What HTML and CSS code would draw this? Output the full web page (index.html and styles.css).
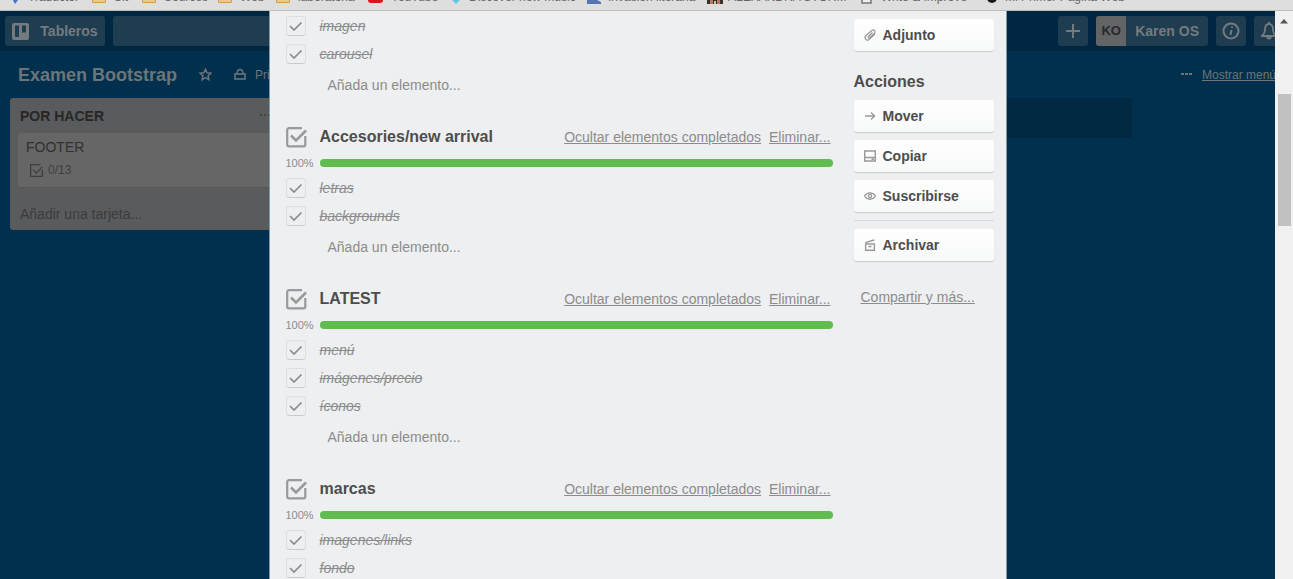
FILE: index.html
```html
<!DOCTYPE html>
<html lang="es">
<head>
<meta charset="utf-8">
<title>Examen Bootstrap | Trello</title>
<link rel="stylesheet" href="styles.css">
</head>
<body>
<nav class="bookmarks" aria-label="Marcadores">
  <a href="#" class="bm bm-first"><svg width="14" height="14" viewBox="0 0 14 14"><path d="M0 0h11v9H0z" fill="#4b8bf4"/><path d="M7 9h5l-3 4z" fill="#3b6fd6"/></svg>Traductor</a>
  <a href="#" class="bm bm-site"><i class="folder"></i>Sit</a>
  <a href="#" class="bm bm-sources"><i class="folder"></i>Sources</a>
  <a href="#" class="bm bm-web"><i class="folder"></i>Web</a>
  <a href="#" class="bm bm-lab"><i class="folder"></i>laboratoria</a>
  <a href="#" class="bm bm-youtube"><i class="youtube"></i>YouTube</a>
  <a href="#" class="bm bm-music"><svg width="12" height="12" viewBox="0 0 12 12"><path d="M6 0l6 6-6 6-6-6z" fill="#62c6dc"/></svg>Discover new music</a>
  <a href="#" class="bm bm-invasion"><svg width="14" height="14" viewBox="0 0 14 14"><path d="M1 0h9v9l4 2v2H0V9h1z" fill="#5574b4"/></svg>Invasión literaria</a>
  <a href="#" class="bm bm-alex"><svg width="16" height="14" viewBox="0 0 16 14"><path d="M0 0h16v13H0z" fill="#3a302b"/><path d="M3 9h3v4H3zM10 8h3v5h-3z" fill="#b5795c"/><path d="M7 10h2v3H7z" fill="#d5c3a4"/></svg>ALEXANDRA STORM</a>
  <a href="#" class="bm bm-write"><svg width="11" height="14" viewBox="0 0 11 14"><path d="M1 1h9v11H1z" fill="#eee" stroke="#777" stroke-width="1.5"/></svg>Write &amp; Improve</a>
  <a href="#" class="bm"><svg width="10" height="12" viewBox="0 0 10 12"><circle cx="5" cy="6" r="5" fill="#111"/></svg>Mi Primer Página Web</a>
</nav>

<div class="window">
  <div class="viewport">
    <div class="surface">
      <header class="topbar">
        <button class="top-btn boards-btn"><svg width="17" height="17" viewBox="0 0 17 17"><path fill="currentColor" fill-rule="evenodd" d="M2 0h13a2 2 0 0 1 2 2v13a2 2 0 0 1-2 2H2a2 2 0 0 1-2-2V2a2 2 0 0 1 2-2zM3 2.500v11.500h4V2.500zM10 2.500v7h4v-7z"/></svg>Tableros</button>
        <input class="search" type="text" aria-label="Buscar">
        <div class="top-right">
          <button class="top-btn square" aria-label="Crear"><svg width="16" height="16" viewBox="0 0 16 16"><path d="M8 1v14M1 8h14" stroke="currentColor" stroke-width="2"/></svg></button>
          <button class="top-btn user"><span class="avatar">KO</span><span class="user-name">Karen OS</span></button>
          <button class="top-btn square" aria-label="Información"><svg width="18" height="18" viewBox="0 0 18 18" fill="none" stroke="currentColor"><circle cx="9" cy="9" r="7.500" stroke-width="2"/><path d="M9.600 8l-1.200 5M10.200 4.500l-.3 1.500" stroke-width="2"/></svg></button>
          <button class="top-btn square" aria-label="Notificaciones"><svg width="16" height="18" viewBox="0 0 16 18" fill="none" stroke="currentColor" stroke-width="1.800"><path d="M8 2C4.500 2 4 5 4 8c0 3-1 4-3 6h14c-2-2-3-3-3-6 0-3-.5-6-4-6zM8 0v2M6 15c.5 2 3.500 2 4 0"/></svg></button>
        </div>
      </header>

      <div class="board-head">
        <h1>Examen Bootstrap</h1>
        <button class="plain" aria-label="Favorito"><svg width="13" height="13" viewBox="0 0 13 13"><path d="M6.500 1.200l1.600 3.600 3.900.4-2.900 2.600.8 3.900-3.400-2-3.400 2 .8-3.900L1 5.200l3.900-.4z" fill="none" stroke="currentColor" stroke-width="1.500"/></svg></button>
        <button class="plain privacy"><svg width="12" height="13" viewBox="0 0 12 13" fill="none" stroke="currentColor" stroke-width="1.500"><path d="M1 6h10v5H1zM3 6c0-6 6-6 6 0"/></svg><span>Privado</span></button>
        <div class="board-menu"><svg width="11" height="3" viewBox="0 0 11 3" fill="currentColor"><path d="M0 0h3v2H0zM4 0h3v2H4zM8 0h3v2H8z"/></svg><a href="#">Mostrar menú</a></div>
      </div>

      <main class="lists">
        <section class="list">
          <div class="list-head"><h2>POR HACER</h2><svg width="11" height="3" viewBox="0 0 11 3" fill="currentColor"><path d="M0 0h2v2H0zM4 0h2v2H4zM8 0h2v2H8z"/></svg></div>
          <article class="card">
            <p>FOOTER</p>
            <div class="badge"><svg width="13" height="13" viewBox="0 0 20 20" fill="none" stroke="currentColor" stroke-width="2"><path d="M16 1H1v18h18V9M5 9l5 5 9-10"/></svg>0/13</div>
          </article>
          <a href="#" class="add-card">Añadir una tarjeta...</a>
        </section>
        <div class="list-space"></div>
        <div class="list-space"></div>
        <div class="list-space new-list"></div>
      </main>
    </div>

    <div class="dialog" role="dialog" aria-label="Tarjeta">
      <div class="checklists">
        <section class="checklist">
          <label class="item"><input type="checkbox" checked><span>imagen</span></label>
          <label class="item"><input type="checkbox" checked><span>carousel</span></label>
          <a href="#" class="add-item">Añada un elemento...</a>
        </section>

        <section class="checklist">
          <div class="check-head"><svg class="check-icon" width="21" height="21" viewBox="0 0 21 21"><use href="#box-check"/></svg><h3>Accesories/new arrival</h3><a href="#">Ocultar elementos completados</a><a href="#">Eliminar...</a></div>
          <div class="progress"><span>100%</span><div class="bar"></div></div>
          <label class="item"><input type="checkbox" checked><span>letras</span></label>
          <label class="item"><input type="checkbox" checked><span>backgrounds</span></label>
          <a href="#" class="add-item">Añada un elemento...</a>
        </section>

        <section class="checklist">
          <div class="check-head"><svg class="check-icon" width="21" height="21" viewBox="0 0 21 21"><use href="#box-check"/></svg><h3>LATEST</h3><a href="#">Ocultar elementos completados</a><a href="#">Eliminar...</a></div>
          <div class="progress"><span>100%</span><div class="bar"></div></div>
          <label class="item"><input type="checkbox" checked><span>menú</span></label>
          <label class="item"><input type="checkbox" checked><span>imágenes/precio</span></label>
          <label class="item"><input type="checkbox" checked><span>íconos</span></label>
          <a href="#" class="add-item">Añada un elemento...</a>
        </section>

        <section class="checklist">
          <div class="check-head"><svg class="check-icon" width="21" height="21" viewBox="0 0 21 21"><g id="box-check" fill="none" stroke="#999" stroke-width="2.200"><path d="M16 1.200H3A1.800 1.800 0 0 0 1.200 3v14.500A1.800 1.800 0 0 0 3 19.300h14.500a1.800 1.800 0 0 0 1.800-1.800V9"/><path d="M5 8.500l5 5L20 3.500" stroke-width="2.500"/></g></svg><h3>marcas</h3><a href="#">Ocultar elementos completados</a><a href="#">Eliminar...</a></div>
          <div class="progress"><span>100%</span><div class="bar"></div></div>
          <label class="item"><input type="checkbox" checked><span>imagenes/links</span></label>
          <label class="item"><input type="checkbox" checked><span>fondo</span></label>
        </section>
      </div>

      <aside class="side">
        <button class="action"><svg width="12" height="12" viewBox="0 0 12 12" fill="none" stroke="currentColor" stroke-width="1.200"><path d="M8.500 3.500L4.500 7.500c-.8 1 .4 2 1.300 1.200l4.500-4.200C12.300 2.300 10 0 7.800 1.500L2 6.500C-.5 9 2.300 12.500 5 10.500l6-5.500"/></svg>Adjunto</button>
        <h3>Acciones</h3>
        <button class="action"><svg width="12" height="12" viewBox="0 0 12 12" fill="none" stroke="currentColor" stroke-width="1.300"><path d="M1 6h10M7 2.500L10.700 6 7 9.500"/></svg>Mover</button>
        <button class="action"><svg width="12" height="12" viewBox="0 0 12 12" fill="none" stroke="currentColor" stroke-width="1.400"><path d="M.7 1h10.600v10H.7zM.7 7.500h10.600M7.500 9.300H10"/></svg>Copiar</button>
        <button class="action"><svg width="12" height="12" viewBox="0 0 12 12" fill="none" stroke="currentColor" stroke-width="1.300"><path d="M.6 6C3 1.700 9 1.700 11.400 6 9 10.300 3 10.300.6 6z"/><circle cx="6" cy="6" r="1.600"/></svg>Suscribirse</button>
        <hr>
        <button class="action"><svg width="12" height="12" viewBox="0 0 12 12" fill="none" stroke="currentColor" stroke-width="1.400"><path d="M1.600 5h8.800v6.300H1.600zM1.200 3.600l9-2.600M4.500 7.500h3"/></svg>Archivar</button>
        <a href="#" class="share">Compartir y más...</a>
      </aside>
    </div>
  </div>

  <div class="scrollbar" aria-hidden="true">
    <svg width="8" height="5" viewBox="0 0 8 5"><path d="M4 0l4 4.500H0z" fill="#555"/></svg>
    <div class="thumb"></div>
  </div>
</div>
</body>
</html>
```
FILE: styles.css
```css
* { box-sizing: border-box; }

body {
  margin: 0;
  height: 100vh;
  display: flex;
  flex-direction: column;
  overflow: hidden;
  font-family: "Liberation Sans", Arial, sans-serif;
  font-size: 14px;
  line-height: 20px;
  color: #4d4d4d;
}

h1, h2, h3, p { margin: 0; }
button { font: inherit; border: 0; padding: 0; cursor: pointer; }
a { color: inherit; }
svg { flex: none; }

/* Browser bookmarks strip; only its lower edge shows */
.bookmarks {
  flex: none;
  height: 11px;
  display: flex;
  align-items: flex-end;
  padding: 0 6px;
  overflow: hidden;
  background: #dedede;
  border-bottom: 1px solid #bdbdbd;
  white-space: nowrap;
}
.bm {
  flex: none;
  display: flex;
  align-items: center;
  gap: 8px;
  height: 14px;
  margin: 0 15px 6px 0;
  color: #666;
  font-size: 12px;
  line-height: 14px;
  text-decoration: none;
}
.bm svg { margin-top: 2px; }
.folder {
  flex: none;
  width: 14px;
  height: 11px;
  background: #f3c683;
  border: 1px solid #d39b50;
  border-radius: 1px;
}
.youtube { flex: none; width: 15px; height: 11px; border-radius: 3px; background: #d8171c; }
.bm-first { width: 71px; }
.bm-site { width: 35px; }
.bm-sources { width: 61px; }
.bm-web { width: 43px; }
.bm-lab { width: 77px; }
.bm-youtube { width: 67px; }
.bm-music { width: 122px; gap: 7px; }
.bm-invasion { width: 105px; gap: 7px; }
.bm-alex { width: 139px; gap: 5px; }
.bm-write { width: 111px; gap: 9px; }

.window { flex: 1; min-height: 0; display: flex; }
.viewport {
  position: relative;
  flex: 1;
  min-width: 0;
  overflow: hidden;
  background: #00304d;
}

/* Board behind the dialog; it reaches under the scrollbar */
.surface { margin-right: -17px; }
.topbar {
  height: 40px;
  display: flex;
  align-items: center;
  gap: 8px;
  padding: 0 8px 0 5px;
  background: #002742;
}
.top-btn {
  height: 30px;
  display: flex;
  align-items: center;
  justify-content: center;
  border-radius: 3px;
  background: #1f3d50;
  color: #747b7f;
  font-weight: bold;
}
.boards-btn { width: 100px; gap: 11px; }
.search { width: 200px; height: 30px; border: 0; border-radius: 3px; background: #1f3d50; }
.top-right { display: flex; gap: 8px; margin-left: auto; }
.square { width: 30px; }
.user { overflow: hidden; }
.avatar { width: 30px; line-height: 30px; background: #636465; color: #292929; font-size: 13px; }
.user-name { padding: 0 9px; }

.board-head {
  height: 47px;
  display: flex;
  align-items: center;
  padding: 0 16px 0 18px;
  color: #6d7579;
  font-size: 12px;
}
.board-head h1 { font-size: 18px; margin-right: 22px; }
.plain { display: flex; align-items: center; gap: 9px; margin-right: 22px; background: none; color: inherit; }
.board-menu { display: flex; align-items: center; gap: 10px; margin-left: auto; }

.lists { display: flex; align-items: flex-start; gap: 10px; padding: 0 10px; }
.list { flex: none; width: 273px; padding: 0 8px; border-radius: 3px; background: #5a5b5d; }
.list-head {
  height: 35px;
  display: flex;
  align-items: center;
  justify-content: space-between;
  padding: 0 4px 0 2px;
  color: #434343;
}
.list-head h2 { font-size: 14px; color: #262626; }
.card { padding: 4px 8px 8px; border-radius: 3px; background: #666; border-bottom: 1px solid #555; color: #303030; }
.badge { display: flex; align-items: center; gap: 5px; height: 22px; padding: 4px 4px 0; color: #3e3e3e; font-size: 12px; }
.add-card { display: block; padding: 16px 2px 6px; color: #3c3c3c; text-decoration: none; }
.list-space { flex: none; width: 273px; height: 40px; }
.new-list { border-radius: 3px; background: #002840; }

/* Card dialog */
.dialog {
  position: absolute;
  top: 0;
  bottom: 0;
  left: 50%;
  width: 738px;
  margin-left: -369px;
  display: flex;
  align-items: flex-start;
  gap: 21px;
  padding: 1px 12px 0 16px;
  overflow: hidden;
  background: #edeff0;
  border: solid #8299a6;
  border-width: 0 1px;
}
.checklists { flex: 1; min-width: 0; color: #8c8c8c; }
.checklist { margin-bottom: 20px; }
.check-head { height: 30px; display: flex; align-items: center; gap: 8px; }
.check-head h3 { flex: 1; font-size: 16px; color: #4d4d4d; }
.check-head a { line-height: 22px; padding-bottom: 1px; }
.check-head a:last-child { margin-right: 2px; }
.check-icon { margin-right: 5px; }
.progress { height: 22px; display: flex; align-items: center; font-size: 11px; }
.progress span { width: 34px; }
.bar { flex: 1; height: 8px; border-radius: 4px; background: #61bd4f; }
.item { height: 28px; display: flex; align-items: center; gap: 14px; }
.item input {
  appearance: none;
  width: 20px;
  height: 20px;
  margin: 0;
  border: 1px solid #dcdedf;
  border-bottom-color: #c9cbcc;
  border-radius: 3px;
  background: url("data:image/svg+xml,%3Csvg xmlns='http://www.w3.org/2000/svg' viewBox='0 0 18 18'%3E%3Cpath d='M3 9l4 4 7.500-7.500' fill='none' stroke='%238c8c8c' stroke-width='1.700'/%3E%3C/svg%3E") center / 18px 18px no-repeat;
}
.item span { font-style: italic; text-decoration: line-through; }
.add-item { display: block; height: 34px; padding-left: 42px; line-height: 34px; text-decoration: none; }

.side { flex: none; width: 140px; display: flex; flex-direction: column; gap: 8px; padding-top: 7px; }
.side h3 { height: 33px; padding-top: 13px; font-size: 16px; }
.action {
  height: 32px;
  display: flex;
  align-items: center;
  gap: 7px;
  padding-left: 10px;
  border-radius: 3px;
  background: linear-gradient(#fff, #f8f9f9);
  box-shadow: 0 1px 1px #c8cbcd;
  color: #4d4d4d;
  font-weight: bold;
}
.action svg { color: #999; }
.side hr { width: 100%; height: 1px; margin: 0; border: 0; background: #d6dadc; }
.share { margin-top: 18px; padding-left: 7px; color: #8c8c8c; }

.scrollbar {
  flex: none;
  width: 18px;
  display: flex;
  flex-direction: column;
  align-items: center;
  padding-top: 8px;
  background: #f1f1f1;
}
.thumb { width: 13px; height: 132px; margin-top: 70px; background: #c1c1c1; }
```
